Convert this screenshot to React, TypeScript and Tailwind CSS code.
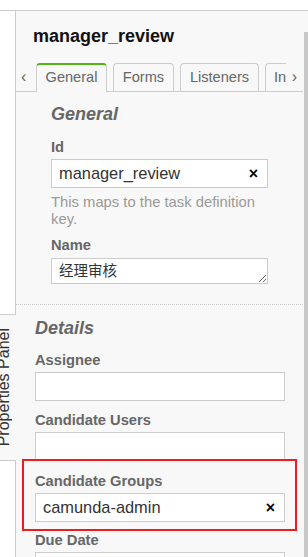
import React from "react";

function Field({ label, value }: { label: string; value?: string }) {
  return (
    <div>
      <div className="text-[14.7px] leading-[17px] font-bold text-[#666]">{label}</div>
      <div className="mt-[3px] flex h-[29px] items-center border border-[#ccc] bg-white">
        <input
          readOnly
          value={value ?? ""}
          className="h-full min-w-0 flex-1 bg-transparent pl-[7px] text-[16.4px] text-[#333] outline-none"
        />
        {value && (
          <button className="pr-[9px] text-[16px] leading-none font-bold text-black">×</button>
        )}
      </div>
    </div>
  );
}

function Tab({ label, active, w, last }: { label: string; active?: boolean; w: string; last?: boolean }) {
  if (active) {
    return (
      <div
        className={`${w} relative flex h-[29px] items-center justify-center rounded-t-[4px] border-x border-t-2 border-x-[#ccc] border-t-[#52b415] bg-[#f8f8f8] pb-[1px] text-[14.6px] text-[#666]`}
      >
        {label}
      </div>
    );
  }
  return (
    <div
      className={`${w} flex h-[28px] items-center rounded-t-[4px] border-t border-l border-[#ccc] text-[14.6px] text-[#666] ${
        last ? "overflow-hidden rounded-tr-none pl-[8px]" : "justify-center border-r"
      }`}
    >
      {label}
    </div>
  );
}

export default function App() {
  return (
    <div className="h-[557px] w-[308px] overflow-hidden bg-white font-['Liberation_Sans','Noto_Sans_CJK_SC',sans-serif]">
      <div className="h-[10px]" />
      <div className="flex h-[547px] border-t border-[#ccc]">
        {/* left edge + toggle tab */}
        <div className="flex w-[16px] flex-col">
          <div className="h-[303px] border-r border-[#ccc]" />
          <div className="flex h-[147px] items-center overflow-hidden border-y border-[#ccc] bg-[#f8f8f8]">
            <span className="-ml-[5px] rotate-180 text-[16px] leading-[18px] whitespace-nowrap text-[#333] [writing-mode:vertical-rl]">
              Properties Panel
            </span>
          </div>
          <div className="flex-1 border-r border-[#ccc]" />
        </div>

        {/* panel */}
        <div className="flex min-w-0 flex-1 bg-[#f8f8f8]">
          <div className="min-w-0 flex-1">
            <div className="pt-[15px] pl-[17px] text-[18px] leading-[21px] font-bold text-[#111]">
              manager_review
            </div>

            {/* Tabs */}
            <div className="mt-[16px] flex h-[29px] items-start border-b border-[#ccc]">
              <div className="flex h-[28px] w-[20px] items-center pl-[5px] text-[16px] text-[#666]">‹</div>
              <div className="flex items-start gap-[6px]">
                <Tab label="General" active w="w-[71px]" />
                <Tab label="Forms" w="w-[61px]" />
                <Tab label="Listeners" w="w-[79px]" />
                <Tab label="In" w="w-[21px]" last />
              </div>
              <div className="flex h-[28px] flex-1 items-center justify-center text-[16px] text-[#666]">›</div>
            </div>

            {/* General group */}
            <div className="border-b border-dotted border-[#ccc] px-[35px] pt-[12px] pb-[20px]">
              <div className="text-[18px] leading-[21px] font-bold text-[#666] italic">General</div>
              <div className="mt-[14px]">
                <Field label="Id" value="manager_review" />
              </div>
              <div className="mt-[6px] text-[14.8px] leading-[17px] text-[#999]">
                This maps to the task definition key.
              </div>
              <div className="mt-[9px] text-[14.7px] leading-[17px] font-bold text-[#666]">Name</div>
              <textarea
                readOnly
                defaultValue="经理审核"
                className="mt-[4px] block h-[26px] w-full overflow-hidden border border-[#ccc] bg-white px-[7px] py-[3px] text-[14.5px] leading-[18px] text-[#333] outline-none"
              />
            </div>

            {/* Details group */}
            <div className="pt-[13px] pr-[18px] pl-[19px]">
              <div className="text-[18px] leading-[21px] font-bold text-[#666] italic">Details</div>
              <div className="mt-[13px]">
                <Field label="Assignee" />
              </div>
              <div className="mt-[11px]">
                <Field label="Candidate Users" />
              </div>
              <div className="relative mt-[12px]">
                <Field label="Candidate Groups" value="camunda-admin" />
                <div className="pointer-events-none absolute -top-[14px] -right-[12px] -bottom-[9px] -left-[13px] border-2 border-[#ee1c1c]" />
              </div>
              <div className="mt-[10px]">
                <Field label="Due Date" />
              </div>
            </div>
          </div>

          {/* scrollbar */}
          <div className="flex w-[5px] flex-col items-end pt-[21px]">
            <div className="w-[4px] flex-1 bg-[#c8c8c8]" />
          </div>
        </div>
      </div>
    </div>
  );
}
